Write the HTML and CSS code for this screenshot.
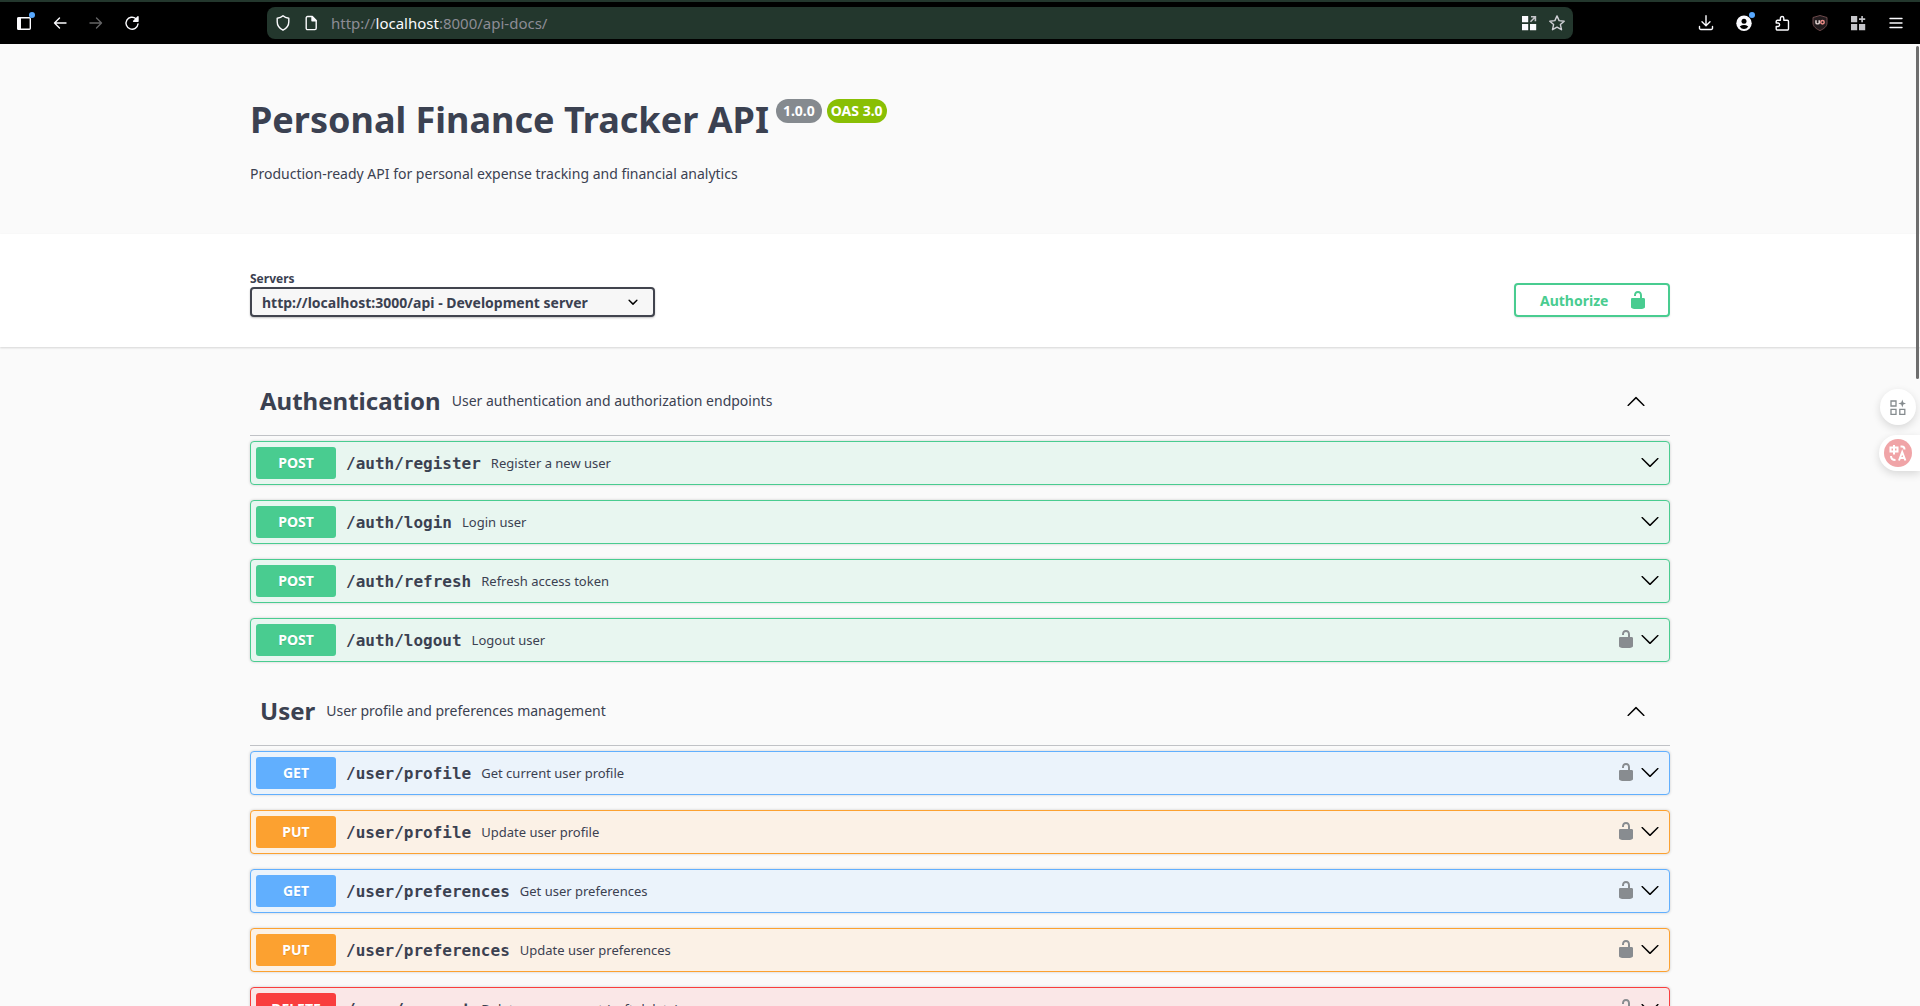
FILE: index.html
```html
<!DOCTYPE html>
<html lang="en">
<head>
<meta charset="utf-8">
<title>Personal Finance Tracker API</title>
<link rel="stylesheet" href="styles.css">
</head>
<body>
<svg class="sprite" aria-hidden="true">
  <symbol id="unlocked" viewBox="0 0 20 20"><path d="M15.8 8H14V5.6C14 2.703 12.665 1 10 1 7.334 1 6 2.703 6 5.6V6h2v-.801C8 3.754 8.797 3 10 3c1.203 0 2 .754 2 2.199V8H4c-.553 0-1 .646-1 1.199V17c0 .549.428 1.139.951 1.307l1.197.387C5.672 18.861 6.55 19 7.1 19h5.8c.549 0 1.428-.139 1.951-.307l1.196-.387c.524-.167.953-.757.953-1.306V9.199C17 8.646 16.352 8 15.8 8z"/></symbol>
  <symbol id="arrow-up" viewBox="0 0 20 20"><path d="M17.418 14.908c.272.281.709.281.979 0s.271-.736 0-1.018l-7.908-7.8a.697.697 0 0 0-.979 0L1.602 13.890c-.272.281-.271.737 0 1.018s.709.281.979 0L10 7.767z"/></symbol>
  <symbol id="arrow-down" viewBox="0 0 20 20"><path d="M17.418 6.109c.272-.268.709-.268.979 0s.271.701 0 .969l-7.908 7.830c-.27.268-.707.268-.979 0l-7.908-7.830c-.27-.268-.27-.701 0-.969.271-.268.709-.268.979 0L10 13.250z"/></symbol>
</svg>

<header class="browser">
  <div class="group nav">
    <button class="tool badged" aria-label="Sidebar"><svg viewBox="0 0 16 16"><rect x="1.700" y="2.700" width="12.600" height="11.600" rx="1" fill="none" stroke="#fbfbfe" stroke-width="1.400"/><path d="M1.500 2.500h3.500v12H1.500z"/></svg></button>
    <button class="tool" aria-label="Back"><svg viewBox="0 0 16 16" class="line"><path d="M14 8H2.500M7.500 3 2.500 8l5 5"/></svg></button>
    <button class="tool" aria-label="Forward" disabled><svg viewBox="0 0 16 16" class="line"><path d="M2 8h11.500M8.500 3l5 5-5 5"/></svg></button>
    <button class="tool" aria-label="Reload"><svg viewBox="0 0 16 16" class="line"><path d="M12 3.700A6 6 0 1 0 14 9"/><path d="M14 1.800v4.400H9.600z" class="fill"/></svg></button>
  </div>
  <div class="address">
    <svg viewBox="0 0 16 16" class="line"><path d="M8 .8C6.500 2.300 4.500 3 2.200 3.200v3.600c0 3.600 2.300 6.700 5.800 8.400 3.500-1.700 5.800-4.800 5.800-8.400V3.200C11.500 3 9.500 2.300 8 .8z"/></svg>
    <svg viewBox="0 0 16 16" class="line"><path d="M4.500 1.500h4.800L13.200 5.400v7.900a1.300 1.300 0 0 1-1.300 1.300H4.500a1.300 1.300 0 0 1-1.300-1.300V2.800a1.300 1.300 0 0 1 1.300-1.300z"/><path d="M9 1.700v4h4z" class="fill"/></svg>
    <a class="url" href="#top">http://<span>localhost</span>:8000/api-docs/</a>
    <svg viewBox="0 0 16 16"><path d="M1 1h6.200v6.200H1zM1 9h6.200v6.200H1zM9 9h6.200v6.200H9z"/><path d="M10 1.800h4.400v4.400M14.200 2 9.500 6.800" fill="none" stroke="#c5c5c9" stroke-width="1.600"/></svg>
    <svg viewBox="0 0 16 16" class="line soft"><path d="m8 .9 2.100 4.700 5.100.6-3.800 3.400 1.100 5.100L8 12.100l-4.500 2.600 1.100-5.100L.8 6.200l5.100-.6z"/></svg>
  </div>
  <div class="group tools">
    <button class="tool" aria-label="Downloads"><svg viewBox="0 0 16 16" class="line"><path d="M8 .8v9.700M4 6.700l4 4 4-4M1.500 11.500v1.700a1.300 1.300 0 0 0 1.300 1.300h10.400a1.300 1.300 0 0 0 1.300-1.300v-1.700"/></svg></button>
    <button class="tool badged" aria-label="Account"><svg viewBox="0 0 16 16"><circle cx="8" cy="8.300" r="7.700"/><circle cx="8" cy="6.300" r="2.500" fill="#000"/><path d="M3.700 11.400q4.300-2.800 8.600 0-1.700 2.600-4.300 2.600t-4.300-2.600z" fill="#000"/></svg></button>
    <button class="tool" aria-label="Extensions"><svg viewBox="0 0 16 16" class="line"><path d="M2.200 8V6.500a1.200 1.200 0 0 1 1.200-1.200h3V3.200a1.700 1.700 0 0 1 3.400 0v2.100h3.500a1.200 1.200 0 0 1 1.200 1.200v7.300a1.200 1.200 0 0 1-1.200 1.200H3.400a1.200 1.200 0 0 1-1.200-1.200v-2.300h1.700a1.700 1.700 0 0 0 0-3.500z"/></svg></button>
    <button class="tool" aria-label="uBlock"><svg viewBox="0 0 16 16"><path d="M8 .5 15 2.500V8c0 3.700-3.500 6-7 7.600C4.500 14 1 11.700 1 8V2.500z" fill="#211b1d" stroke="#775052" stroke-width=".9"/><path d="M4 5.300v2.600q0 1 1.600 1t1.600-1V5.300" fill="none" stroke="#f1e4e2" stroke-width="1.400"/><circle cx="10.500" cy="7.200" r="1.700" fill="none" stroke="#ee8d88" stroke-width="1.500"/></svg></button>
    <button class="tool" aria-label="Add-ons"><svg viewBox="0 0 16 16" class="grey"><path d="M1 1h6.200v6.200H1zM1 9h6.200v6.200H1zM9 9h6.200v6.200H9zM11.300 1h1.600v2.300h2.300v1.600h-2.300v2.300h-1.600V4.900H9V3.300h2.300z"/></svg></button>
    <button class="tool" aria-label="Menu"><svg viewBox="0 0 16 16" class="line"><path d="M2 3.500h12M2 8h12M2 12.500h12"/></svg></button>
  </div>
</header>

<main id="top">
  <section class="wrap info">
    <h1>Personal Finance Tracker API <span class="tags"><span class="tag">1.0.0</span><span class="tag oas">OAS 3.0</span></span></h1>
    <p>Production-ready API for personal expense tracking and financial analytics</p>
  </section>

  <section class="scheme">
    <div class="wrap scheme-row">
      <div class="servers">
        <label for="server">Servers</label>
        <div class="select">
          <select id="server"><option>http://localhost:3000/api - Development server</option></select>
          <svg viewBox="0 0 20 20" aria-hidden="true"><path d="M13.418 7.859a.695.695 0 0 1 .978 0 .68.68 0 0 1 0 .969l-3.908 3.830a.697.697 0 0 1-.979 0l-3.908-3.830a.68.680 0 0 1 0-.969.695.695 0 0 1 .978 0L10 11z"/></svg>
        </div>
      </div>
      <button class="authorize">Authorize<svg><use href="#unlocked"/></svg></button>
    </div>
  </section>

  <div class="wrap sections">
    <section class="group-section">
      <h2><a href="#auth">Authentication</a><small>User authentication and authorization endpoints</small><button aria-label="Collapse Authentication"><svg><use href="#arrow-up"/></svg></button></h2>
      <div class="ops" id="auth">
        <div class="op post"><span class="method">POST</span><a href="#register">/auth/register</a><span class="desc">Register a new user</span><button class="more" aria-label="Expand"><svg><use href="#arrow-down"/></svg></button></div>
        <div class="op post"><span class="method">POST</span><a href="#login">/auth/login</a><span class="desc">Login user</span><button class="more" aria-label="Expand"><svg><use href="#arrow-down"/></svg></button></div>
        <div class="op post"><span class="method">POST</span><a href="#refresh">/auth/refresh</a><span class="desc">Refresh access token</span><button class="more" aria-label="Expand"><svg><use href="#arrow-down"/></svg></button></div>
        <div class="op post"><span class="method">POST</span><a href="#logout">/auth/logout</a><span class="desc">Logout user</span><button class="lock" aria-label="Authorization"><svg><use href="#unlocked"/></svg></button><button class="more" aria-label="Expand"><svg><use href="#arrow-down"/></svg></button></div>
      </div>
    </section>
    <section class="group-section">
      <h2><a href="#user">User</a><small>User profile and preferences management</small><button aria-label="Collapse User"><svg><use href="#arrow-up"/></svg></button></h2>
      <div class="ops" id="user">
        <div class="op get"><span class="method">GET</span><a href="#profile">/user/profile</a><span class="desc">Get current user profile</span><button class="lock" aria-label="Authorization"><svg><use href="#unlocked"/></svg></button><button class="more" aria-label="Expand"><svg><use href="#arrow-down"/></svg></button></div>
        <div class="op put"><span class="method">PUT</span><a href="#profile-put">/user/profile</a><span class="desc">Update user profile</span><button class="lock" aria-label="Authorization"><svg><use href="#unlocked"/></svg></button><button class="more" aria-label="Expand"><svg><use href="#arrow-down"/></svg></button></div>
        <div class="op get"><span class="method">GET</span><a href="#preferences">/user/preferences</a><span class="desc">Get user preferences</span><button class="lock" aria-label="Authorization"><svg><use href="#unlocked"/></svg></button><button class="more" aria-label="Expand"><svg><use href="#arrow-down"/></svg></button></div>
        <div class="op put"><span class="method">PUT</span><a href="#preferences-put">/user/preferences</a><span class="desc">Update user preferences</span><button class="lock" aria-label="Authorization"><svg><use href="#unlocked"/></svg></button><button class="more" aria-label="Expand"><svg><use href="#arrow-down"/></svg></button></div>
        <div class="op delete"><span class="method">DELETE</span><a href="#account">/user/account</a><span class="desc">Delete user account (soft delete)</span><button class="lock" aria-label="Authorization"><svg><use href="#unlocked"/></svg></button><button class="more" aria-label="Expand"><svg><use href="#arrow-down"/></svg></button></div>
      </div>
    </section>
  </div>
</main>

<div class="scrollbar"></div>
<aside class="floating">
  <button class="bubble" aria-label="Assistant"><svg viewBox="0 0 16 16" fill="none" stroke="#858b8e" stroke-width="1.300"><path d="M1 2h5v5H1zM1 10.300h5v5H1zM9.800 10.300h5v5h-5z"/><path d="m12.300 .5 1 3 3 1-3 1-1 3-1-3-3-1 3-1z" fill="#858b8e" stroke="none"/></svg></button>
  <button class="bubble edge" aria-label="Translate"><svg viewBox="0 0 28 28" fill="none" stroke="#fff" stroke-width="2"><circle cx="14" cy="14" r="14" fill="#f0a4a7" stroke="none"/><path d="M6.500 8.500h7v4h-7zM10 6v9.500M16.500 7.500h1.500q2.500 0 2.500 3M7 17q0 4 4.500 4M15 21.500l3.200-8.500 3.200 8.500M16 19h4.500"/></svg></button>
</aside>
</body>
</html>
```
FILE: styles.css
```css
* { box-sizing: border-box; }
body {
  margin: 0;
  height: 100vh;
  overflow: hidden;
  background: #fafafa;
  color: #3b4151;
  font-family: "Noto Sans", "Open Sans", sans-serif;
  font-size: 14px;
}
button { padding: 0; border: 0; background: none; font: inherit; color: inherit; }
button svg, .address svg { display: block; flex: none; }
a { color: inherit; text-decoration: none; }
.sprite { position: absolute; width: 0; height: 0; }

.browser {
  display: grid;
  grid-template-columns: 267px 1fr 347px;
  align-items: center;
  height: 44px;
  border-top: 2px solid #23372d;
  background: #000;
}
.group { display: flex; align-items: center; }
.nav { gap: 20px; padding-left: 16px; }
.tools { justify-content: flex-end; gap: 22px; padding-right: 16px; }
.tool { position: relative; width: 16px; height: 16px; }
.tool svg, .address svg { width: 16px; height: 16px; fill: #fbfbfe; }
.browser svg.line { fill: none; stroke: #fbfbfe; stroke-width: 1.4px; stroke-linecap: round; stroke-linejoin: round; }
.browser .line .fill { fill: #fbfbfe; }
.browser svg.soft { stroke: #d0d0d6; }
.browser svg.grey { fill: #c5c5c9; }
.tool:disabled { opacity: .4; }
.badged::after {
  content: "";
  position: absolute;
  top: -3px;
  right: -3px;
  width: 6px;
  height: 6px;
  border-radius: 50%;
  background: #57a8ff;
}
.address {
  display: flex;
  align-items: center;
  gap: 12px;
  height: 32px;
  padding: 0 8px;
  border-radius: 8px;
  background: #23372d;
}
.url { flex: 1; font-size: 15px; color: #8d8c95; }
.url span { color: #fbfbfe; }

.wrap { width: 100%; max-width: 1460px; margin: 0 auto; padding: 0 20px; }
.info { padding-top: 51px; padding-bottom: 49px; }
h1 { display: flex; align-items: flex-start; gap: 7px; margin: 0; font-size: 36px; line-height: 50px; }
.tags { display: flex; gap: 5px; padding-top: 4px; }
.tag {
  height: 24px;
  padding: 0 7px;
  border-radius: 12px;
  background: #858a8f;
  color: #fff;
  font-size: 14px;
  line-height: 24px;
}
.tag.oas { padding: 0 4px; background: #89bf04; }
.info p { margin: 18px 0 0; line-height: 22px; }

.scheme { padding: 36px 0 30px; background: #fff; box-shadow: 0 1px 2px rgba(0, 0, 0, .15); }
.scheme-row { display: flex; justify-content: space-between; align-items: flex-end; }
.servers { display: flex; flex-direction: column; font-size: 12px; font-weight: 700; }
.servers label { line-height: 17px; }
.select { position: relative; width: 405px; }
.select select {
  display: block;
  appearance: none;
  width: 100%;
  height: 30px;
  padding: 0 40px 0 10px;
  border: 2px solid #41444e;
  border-radius: 4px;
  background: #f7f7f7;
  box-shadow: 0 1px 2px rgba(0, 0, 0, .25);
  color: #3b4151;
  font: 700 14px "Noto Sans", sans-serif;
}
.select svg { position: absolute; top: 5px; right: 12px; width: 20px; height: 20px; }
.authorize {
  display: flex;
  align-items: center;
  justify-content: space-between;
  width: 156px;
  height: 34px;
  padding: 0 20px 0 24px;
  border: 2px solid #49cc90;
  border-radius: 4px;
  box-shadow: 0 1px 2px rgba(0, 0, 0, .1);
  color: #49cc90;
  font-weight: 700;
}
.authorize svg { width: 20px; height: 20px; fill: #49cc90; }

.sections { padding-top: 5px; }
.group-section { padding-top: 14px; }
h2 {
  display: flex;
  align-items: center;
  height: 70px;
  margin: 0 0 5px;
  padding: 0 24px 0 10px;
  border-bottom: 1px solid rgba(59, 65, 81, .3);
  font-size: 24px;
}
h2 small { flex: 1; padding-left: 11px; font-size: 14px; font-weight: 400; }
h2 svg { width: 20px; height: 20px; }
.ops { display: flex; flex-direction: column; gap: 15px; }
.op {
  display: flex;
  align-items: center;
  gap: 10px;
  height: 44px;
  padding: 0 9px 0 5px;
  border: 1px solid var(--tone);
  border-radius: 4px;
  background: var(--tint);
  box-shadow: 0 0 3px rgba(0, 0, 0, .19);
}
.post { --tone: #49cc90; --tint: #e8f6f0; }
.get { --tone: #61affe; --tint: #ebf3fb; }
.put { --tone: #fca130; --tint: #fbf1e6; }
.delete { --tone: #f93e3e; --tint: #fae7e7; }
.method {
  width: 80px;
  height: 32px;
  border-radius: 3px;
  background: var(--tone);
  color: #fff;
  font-weight: 700;
  line-height: 32px;
  text-align: center;
  text-shadow: 0 1px 0 rgba(0, 0, 0, .1);
}
.op a { font-family: "DejaVu Sans Mono", monospace; font-size: 16px; font-weight: 700; }
.desc { flex: 1; font-size: 13px; }
.op svg { width: 20px; height: 20px; }
.op button { padding-bottom: 2px; }
.op .lock { margin-right: -6px; }
.lock svg { fill: #888c90; }

.scrollbar {
  position: fixed;
  top: 46px;
  right: 1px;
  width: 3px;
  height: 333px;
  border-radius: 2px;
  background: #6d6d6d;
}
.floating { position: fixed; top: 389px; right: 0; display: flex; flex-direction: column; align-items: flex-end; gap: 10px; }
.bubble {
  display: flex;
  align-items: center;
  justify-content: center;
  width: 36px;
  height: 36px;
  margin-right: 4px;
  border-radius: 50%;
  background: #fff;
  box-shadow: 0 3px 8px rgba(0, 0, 0, .14);
}
.bubble svg { width: 16px; height: 16px; }
.bubble.edge { justify-content: flex-start; width: 41px; margin: 0; padding-left: 5px; border-radius: 18px 0 0 18px; }
.bubble.edge svg { width: 28px; height: 28px; }
```
